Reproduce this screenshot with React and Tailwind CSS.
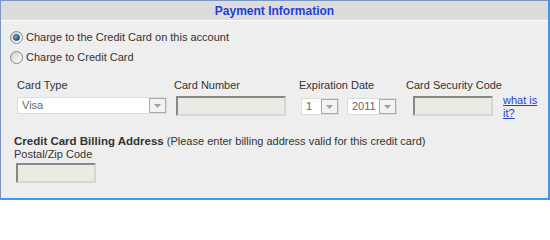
import React from "react";

function Radio({ checked }) {
  return (
    <span className="relative inline-block w-[13px] h-[13px] rounded-full border border-[#8a8a8a] bg-gradient-to-br from-[#d0d0d0] to-[#ffffff] shrink-0">
      {checked && (
        <span className="absolute left-[2px] top-[2px] w-[7px] h-[7px] rounded-full bg-gradient-to-br from-[#7fd0f5] to-[#0a4c7e] border border-[#1c3f5f]" />
      )}
    </span>
  );
}

function Select({ value, width }) {
  return (
    <div
      className="flex h-[17px] bg-white border border-[#dcdcdc] items-stretch"
      style={{ width }}
    >
      <div className="flex-1 pl-[4px] text-[11px] leading-[15px] text-[#666]">{value}</div>
      <div className="w-[17px] border border-[#aaaaaa] bg-[#f2f2f2] flex items-center justify-center">
        <svg width="7" height="4" viewBox="0 0 7 4">
          <path d="M0 0 L7 0 L3.5 4 Z" fill="#a0a0a0" />
        </svg>
      </div>
    </div>
  );
}

function Input({ width }) {
  return (
    <div
      className="h-[20px] bg-[#ebebe4] border-2 border-t-[#888888] border-l-[#888888] border-r-[#d6d6d6] border-b-[#d6d6d6]"
      style={{ width }}
    />
  );
}

export default function App() {
  return (
    <div
      className="w-[550px] h-[200px] bg-[#eeeeee] border-t border-l border-r-2 border-b-2 border-t-[#7896bf] border-l-[#7896bf] border-r-[#3f98ec] border-b-[#3f98ec] text-[#333333] text-[11px]"
      style={{ fontFamily: '"Liberation Sans", Arial, sans-serif' }}
    >
      <div className="h-[20px] bg-[#dcdcdc] border-b border-white flex items-center justify-center">
        <span className="text-[12px] font-bold text-[#1f3fd6]">Payment Information</span>
      </div>

      <div className="pt-[6px] pl-[9px]">
        <div className="flex items-center h-[20px] gap-[3px]">
          <Radio checked />
          <span>Charge to the Credit Card on this account</span>
        </div>
        <div className="flex items-center h-[20px] gap-[3px]">
          <Radio />
          <span>Charge to Credit Card</span>
        </div>
      </div>

      <div className="flex mt-[12px] items-start">
        <div className="ml-[16px] w-[157px] flex flex-col">
          <div className="h-[17px] leading-[13px]">Card Type</div>
          <div className="mt-[1px]">
            <Select value="Visa" width={150} />
          </div>
        </div>
        <div className="w-[125px] flex flex-col">
          <div className="h-[17px] leading-[13px]">Card Number</div>
          <div className="ml-[2px]">
            <Input width={110} />
          </div>
        </div>
        <div className="w-[107px] flex flex-col">
          <div className="h-[17px] leading-[13px]">Expiration Date</div>
          <div className="ml-[2px] mt-[2px] flex gap-[8px]">
            <Select value="1" width={38} />
            <Select value="2011" width={50} />
          </div>
        </div>
        <div className="flex flex-col">
          <div className="h-[17px] leading-[13px]">Card Security Code</div>
          <div className="ml-[7px] flex items-start">
            <Input width={80} />
            <a
              href="#"
              className="ml-[10px] mt-[-2px] text-[#1f3fd6] underline leading-[13px] w-[38px]"
            >
              what is it?
            </a>
          </div>
        </div>
      </div>

      <div className="pl-[13px] mt-[14px]">
        <div className="leading-[14px]">
          <span className="font-bold text-[11.5px]">Credit Card Billing Address</span>{" "}
          <span>(Please enter billing address valid for this credit card)</span>
        </div>
        <div className="leading-[13px]">Postal/Zip Code</div>
        <div className="ml-[2px] mt-[2px]">
          <Input width={80} />
        </div>
      </div>
    </div>
  );
}
